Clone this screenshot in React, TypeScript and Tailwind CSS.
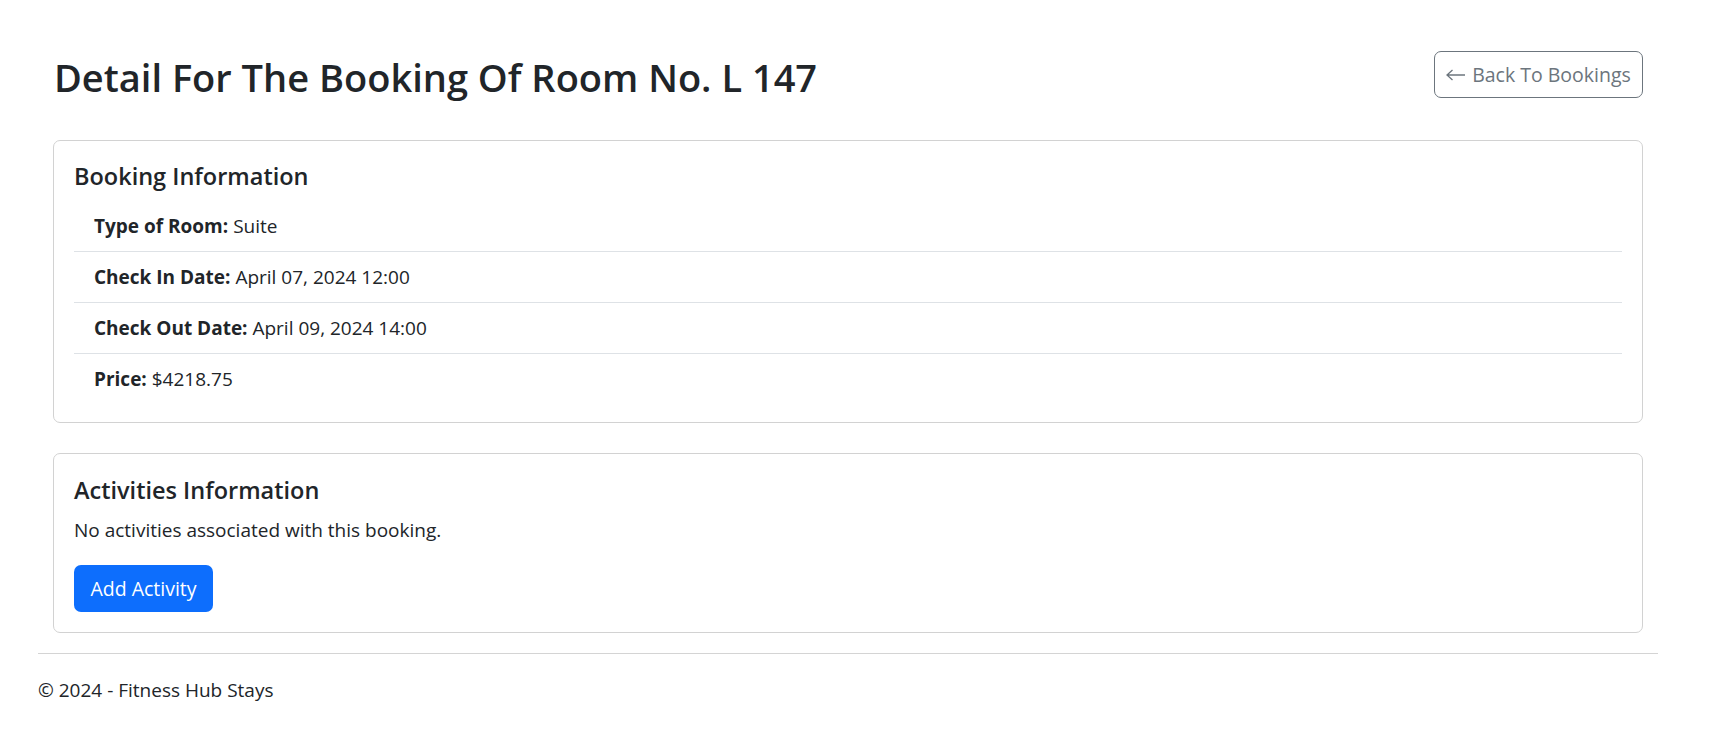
import React from 'react';

const bookingRows = [
  { label: 'Type of Room:', value: 'Suite' },
  { label: 'Check In Date:', value: 'April 07, 2024 12:00' },
  { label: 'Check Out Date:', value: 'April 09, 2024 14:00' },
  { label: 'Price:', value: '$4218.75' },
];

export default function App() {
  return (
    <div className="min-h-screen bg-white text-[#212529] font-['Open_Sans',sans-serif] text-[19px]">
      <main className="ml-[53px] w-[1590px] pt-[51px]">
        {/* En-tête */}
        <div className="flex items-start justify-between mb-[39px]">
          <h1 className="mt-[2px] text-[38px] leading-[48px] font-semibold pl-[1px]">
            Detail For The Booking Of Room No. L 147
          </h1>
          <button className="flex items-center gap-[6px] h-[47px] w-[209px] justify-center border border-[#6c757d] rounded-[7px] text-[#6c757d] text-[19.5px] leading-[30px]">
            <svg width="20" height="12" viewBox="0 0 20 12" fill="none" stroke="#6c757d" strokeWidth="1.3">
              <path d="M1 6h18M6.5 1L1 6l5.5 5" />
            </svg>
            <span>Back To Bookings</span>
          </button>
        </div>

        {/* Réservation */}
        <section className="border border-[#d2d2d2] rounded-[7px] px-5 pt-5 pb-[18px] mb-[30px]">
          <h4 className="text-[23.5px] leading-[30px] font-semibold mb-[10px]">Booking Information</h4>
          <ul>
            {bookingRows.map((row, i) => (
              <li
                key={row.label}
                className={`px-5 py-[10px] leading-[30px] ${i < bookingRows.length - 1 ? 'border-b border-[#dee2e6]' : ''}`}
              >
                <strong className="font-bold">{row.label}</strong> {row.value}
              </li>
            ))}
          </ul>
        </section>

        {/* Activités */}
        <section className="border border-[#d2d2d2] rounded-[7px] px-5 pt-[21px] pb-5">
          <h4 className="text-[23.5px] leading-[30px] font-semibold mb-[10px]">Activities Information</h4>
          <p className="leading-[30px] mb-5">No activities associated with this booking.</p>
          <button className="h-[47px] w-[139px] rounded-[7px] bg-[#0d6efd] text-white text-[19.5px] leading-[30px]">
            Add Activity
          </button>
        </section>
      </main>

      <footer className="ml-[38px] w-[1620px] mt-[20px] border-t border-[#d4d4d4] pt-[21px] pb-6">
        <p className="leading-[30px]">© 2024 - Fitness Hub Stays</p>
      </footer>
    </div>
  );
}
